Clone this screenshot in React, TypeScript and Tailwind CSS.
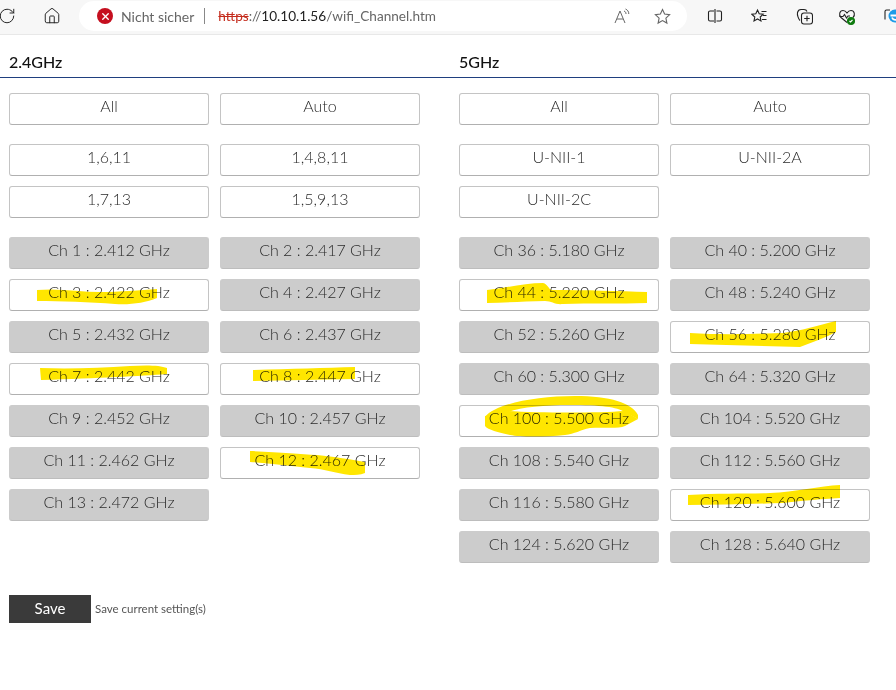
import { Home, RotateCw, X } from 'lucide-react';

type Channel = { label: string; on?: boolean };

const ch24: Channel[] = [
  { label: 'Ch 1 : 2.412 GHz' },
  { label: 'Ch 2 : 2.417 GHz' },
  { label: 'Ch 3 : 2.422 GHz', on: true },
  { label: 'Ch 4 : 2.427 GHz' },
  { label: 'Ch 5 : 2.432 GHz' },
  { label: 'Ch 6 : 2.437 GHz' },
  { label: 'Ch 7 : 2.442 GHz', on: true },
  { label: 'Ch 8 : 2.447 GHz', on: true },
  { label: 'Ch 9 : 2.452 GHz' },
  { label: 'Ch 10 : 2.457 GHz' },
  { label: 'Ch 11 : 2.462 GHz' },
  { label: 'Ch 12 : 2.467 GHz', on: true },
  { label: 'Ch 13 : 2.472 GHz' },
];

const ch5: Channel[] = [
  { label: 'Ch 36 : 5.180 GHz' },
  { label: 'Ch 40 : 5.200 GHz' },
  { label: 'Ch 44 : 5.220 GHz', on: true },
  { label: 'Ch 48 : 5.240 GHz' },
  { label: 'Ch 52 : 5.260 GHz' },
  { label: 'Ch 56 : 5.280 GHz', on: true },
  { label: 'Ch 60 : 5.300 GHz' },
  { label: 'Ch 64 : 5.320 GHz' },
  { label: 'Ch 100 : 5.500 GHz', on: true },
  { label: 'Ch 104 : 5.520 GHz' },
  { label: 'Ch 108 : 5.540 GHz' },
  { label: 'Ch 112 : 5.560 GHz' },
  { label: 'Ch 116 : 5.580 GHz' },
  { label: 'Ch 120 : 5.600 GHz', on: true },
  { label: 'Ch 124 : 5.620 GHz' },
  { label: 'Ch 128 : 5.640 GHz' },
];

function Btn({ label, on = true }: Channel) {
  return (
    <button
      className={
        'h-8 w-[200px] rounded-[3px] pb-[7px] text-center text-[16px] font-light leading-6 text-[#2b2b2b] ' +
        (on
          ? 'border border-[#c4c4c4] border-b-[#b0b0b0] bg-white'
          : 'border border-[#cccccc] border-b-[#bdbdbd] bg-[#cccccc]')
      }
    >
      {label}
    </button>
  );
}

function Column({ title, presets, channels, first }: { title: string; presets: string[]; channels: Channel[]; first?: boolean }) {
  return (
    <div className={first ? 'w-[450px] pl-[9px]' : 'flex-1 pl-[9px]'}>
      <div className="flex h-[43px] items-end pb-[4px] text-[16px] font-medium leading-6 text-[#111]">{title}</div>
      <div className="mt-[15px] grid w-[411px] grid-cols-[200px_200px] gap-x-[11px]">
        <Btn label="All" />
        <Btn label="Auto" />
      </div>
      <div className="mt-[19px] grid w-[411px] grid-cols-[200px_200px] gap-x-[11px] gap-y-[10px]">
        {presets.map((p) => (
          <Btn key={p} label={p} />
        ))}
      </div>
      <div className="mt-[19px] grid w-[411px] grid-cols-[200px_200px] gap-x-[11px] gap-y-[10px]">
        {channels.map((c) => (
          <Btn key={c.label} label={c.label} on={!!c.on} />
        ))}
      </div>
    </div>
  );
}

function Toolbar() {
  return (
    <div className="flex h-[35px] items-start overflow-hidden border-b border-[#e8e8e8] bg-[#f7f7f7] text-[#222]">
      <div className="ml-[-2px] mt-[7px] w-[18px] shrink-0">
        <RotateCw size={18} strokeWidth={1.3} />
      </div>
      <div className="ml-[27px] mt-[7px] shrink-0">
        <Home size={18} strokeWidth={1.3} />
      </div>
      <div className="ml-[18px] mt-[1px] flex h-[30px] w-[608px] shrink-0 items-center rounded-full bg-white pl-[18px] pr-4 text-[14px]">
        <span className="flex h-4 w-4 items-center justify-center rounded-full bg-[#c50f1f]">
          <X size={11} strokeWidth={3} className="text-white" />
        </span>
        <span className="ml-[8px] text-[#666]">Nicht sicher</span>
        <span className="ml-[10px] h-4 w-px bg-[#888]" />
        <span className="ml-[13px] text-[13.6px]">
          <span className="text-[#c42b1c] line-through">https</span>
          <span className="text-[#666]">://</span>
          <span className="text-[#222]">10.10.1.56</span>
          <span className="text-[#666]">/wifi_Channel.htm</span>
        </span>
        <span className="ml-auto flex items-center gap-[23px] text-[#666]">
          <svg width="17" height="16" viewBox="0 0 17 16" fill="none" stroke="currentColor" strokeWidth="1">
            <path d="M1 15 6 3l5 12M3 11h6" />
            <path d="M10 3c1.500.5 2 1.500 2 3M11.500 1c2 .8 3.300 2.500 3.300 5" />
          </svg>
          <svg width="17" height="17" viewBox="0 0 17 17" fill="none" stroke="currentColor" strokeWidth="1.100">
            <path d="m8.500 1.500 2.100 4.600 5 .6-3.700 3.400 1 5-4.400-2.500-4.400 2.500 1-5L1.400 6.700l5-.6z" />
          </svg>
        </span>
      </div>
      <div className="ml-[20px] mt-[8px] flex shrink-0 items-start gap-[28px]">
        <svg width="16" height="16" viewBox="0 0 16 16" fill="none" stroke="#222" strokeWidth="1.100">
          <path d="M7 3H3a1.500 1.500 0 0 0-1.500 1.500v7A1.500 1.500 0 0 0 3 13h4M9.500 3H13a1.500 1.500 0 0 1 1.500 1.500v7A1.500 1.500 0 0 1 13 13H9.500M8 1v14" />
        </svg>
        <svg width="17" height="17" viewBox="0 0 17 17" fill="none" stroke="#222" strokeWidth="1.100">
          <path d="m6.500 2 1.700 3.700 4 .5-3 2.800.8 4-3.500-2-3.500 2 .8-4-3-2.800 4-.5z" />
          <path d="M10.500 3.500h5M12 7.500h3.500M11 11.500h4.500" />
        </svg>
        <svg width="17" height="17" viewBox="0 0 17 17" fill="none" stroke="#222" strokeWidth="1.100">
          <path d="M4 12.500C2.500 11 1 7 1.500 4.500 2 2.500 3 1.500 5 1.500h3c1.500 0 2.500.5 3 2" />
          <rect x="5.500" y="5" width="11" height="11" rx="2.500" />
          <path d="M11 7.800v5.500M8.200 10.500h5.500" />
        </svg>
        <svg width="18" height="18" viewBox="0 0 18 18" fill="none" stroke="#222" strokeWidth="1.100" className="ml-[-3px]">
          <path d="M9 14.500 3 9.500C.5 7 1.500 2.500 5 2.500c2 0 3 1 4 2.500 1-1.500 2-2.500 4-2.500 3.500 0 4.500 4.500 2 7" />
          <path d="M1.500 8.500H5l1.500-2L8.500 10l1.500-2h2" />
          <circle cx="13" cy="13" r="3.500" fill="#107c10" stroke="#107c10" />
          <path d="m11.500 13 1 1 2-2" stroke="#fff" />
        </svg>
        <svg width="20" height="18" viewBox="0 0 20 18" fill="none" className="ml-[-1px] mt-[-1px] shrink-0">
          <path d="M7 3H3.500A1.500 1.500 0 0 0 2 4.500v8" stroke="#222" strokeWidth="1.100" />
          <circle cx="12" cy="9" r="6.500" fill="#1e9be8" />
          <path d="M7.500 8.500h9M9 10.500c1 3 5 3 7 1" stroke="#fff" strokeWidth="1.800" />
        </svg>
      </div>
    </div>
  );
}

// Marker scribbles on top of the screenshot
function Highlights() {
  const marks = [
    'M37 290 C60 288 80 292 100 292 C120 292 140 290 157 289 L157 298 C145 303 130 305 115 304 C90 302 60 301 37 301Z',
    'M40 368 C70 369 100 368 130 366 C145 365 160 365 167 368 L167 374 C140 376 100 378 41 380Z',
    'M253 370 C290 369 325 368 355 367 L355 379 C320 380 285 380 253 381Z',
    'M250 451 C280 452 300 454 317 455 C335 457 350 459 365 462 L365 473 C360 475 355 475 350 475 C335 473 325 469 310 468 C290 466 270 463 250 462Z',
    'M487 290 C505 288 525 283 543 283 C548 284 548 289 552 290 C585 290 620 291 647 292 L647 303 C620 304 590 303 563 304 C555 305 552 301 545 301 C525 301 505 303 487 303Z',
    'M690 333 C720 335 755 334 783 333 C800 331 820 325 836 321 L836 332 C825 338 812 342 800 347 C765 346 725 345 690 344Z',
    // Ch 100 is two strokes: the arc over the label and the band behind it
    'M485 417 C495 404 535 396 575 396 C610 396 632 403 638 415 L638 419 L624 412 C618 407 600 405 570 405 C545 405 522 407 508 412 L490 422Z',
    'M485 416 L508 411 C540 413 600 413 624 411 L638 419 L625 426 C618 429 605 427 590 428 C580 430 575 434 565 435 C545 437 520 437 510 435 C498 432 488 430 485 426Z',
    'M688 495 C720 493 745 494 770 493 C795 492 820 486 840 485 L840 498 C820 499 800 501 783 503 C750 504 720 505 688 505Z',
  ];
  return (
    <svg className="pointer-events-none absolute left-0 top-0 mix-blend-multiply" width="896" height="690" viewBox="0 0 896 690">
      {marks.map((d) => (
        <path key={d} d={d} fill="#ffe600" />
      ))}
    </svg>
  );
}

export default function App() {
  return (
    <div className="relative h-[690px] w-[896px] overflow-hidden bg-white font-['Lato',sans-serif]">
      <Toolbar />
      <div className="h-[43px] border-b border-[#1f3f7f]" />
      <div className="mt-[-43px] flex">
        <Column first title="2.4GHz" presets={['1,6,11', '1,4,8,11', '1,7,13', '1,5,9,13']} channels={ch24} />
        <Column title="5GHz" presets={['U-NII-1', 'U-NII-2A', 'U-NII-2C']} channels={ch5} />
      </div>
      <div className="mt-[32px] flex items-center pl-[9px]">
        <button className="h-7 w-[82px] bg-[#3a3a3a] pb-[2px] text-[15px] text-white">Save</button>
        <span className="ml-1 text-[11.5px] leading-none text-[#555]">Save current setting(s)</span>
      </div>
      <Highlights />
    </div>
  );
}
